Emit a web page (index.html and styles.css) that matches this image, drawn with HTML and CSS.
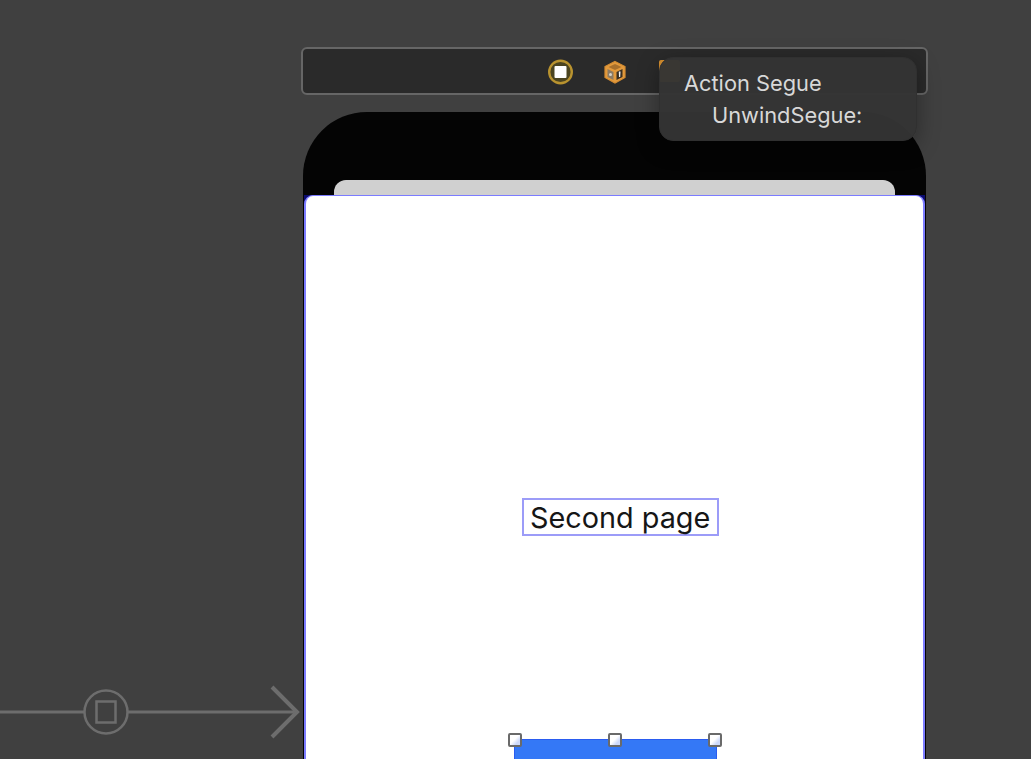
FILE: index.html
```html
<!DOCTYPE html>
<html lang="en">
<head>
<meta charset="utf-8">
<title>Storyboard</title>
<link rel="stylesheet" href="styles.css">
</head>
<body>
<main class="canvas">
  <svg class="segue" width="302" height="54" viewBox="0 0 302 54" aria-hidden="true">
    <path d="M0 27H84M128 27H297" fill="none" stroke="#6d6d6d" stroke-width="3"/>
    <path d="M272 2L297 27L272 52" fill="none" stroke="#6d6d6d" stroke-width="4"/>
    <circle cx="106" cy="27" r="21.5" fill="none" stroke="#6d6d6d" stroke-width="2.5"/>
    <rect x="96.5" y="16.5" width="19" height="21" fill="none" stroke="#6d6d6d" stroke-width="2.5"/>
  </svg>

  <section class="scene">
    <div class="dock">
      <svg class="dock-icon" width="26" height="26" viewBox="0 0 26 26" aria-hidden="true">
        <circle cx="12.5" cy="13" r="11.3" fill="#4b4420" stroke="#b9932f" stroke-width="2.4"/>
        <rect x="6.5" y="7" width="12" height="12" rx="1" fill="#fff"/>
      </svg>
      <svg class="dock-icon" width="24" height="26" viewBox="0 0 24 26" aria-hidden="true">
        <path d="M12 2.5L22 7.5V18.5L12 24L2 18.5V7.5Z" fill="#e39a3c" stroke="#d48c32" stroke-width="1.2"/>
        <path d="M12 5L18.5 8L12 11L5.5 8Z" fill="#a9702b"/>
        <path d="M4.5 10L10.5 13V21L4.5 18Z" fill="#8b7a63"/>
        <path d="M13.5 13L19.5 10V18L13.5 21Z" fill="#3a2f22"/>
        <path d="M15.8 12.5H17.5L17.2 18H16Z" fill="#f2f2f2"/>
        <circle cx="7.5" cy="15.5" r="1.5" fill="#d8d2c8"/>
      </svg>
      <svg class="dock-icon" width="24" height="26" viewBox="0 0 24 26" aria-hidden="true">
        <rect x="3" y="1" width="21" height="22" rx="2" fill="#d9912f"/>
      </svg>
    </div>

    <div class="device">
      <div class="back-sheet"></div>
      <div class="page-frame">
        <div class="page">
          <div class="page-label">Second page</div>
          <div class="selected-button">
            <span class="handle handle-left"></span>
            <span class="handle handle-middle"></span>
            <span class="handle handle-right"></span>
          </div>
        </div>
      </div>
    </div>

    <div class="tooltip">
      <div class="tooltip-title">Action Segue</div>
      <div class="tooltip-detail">UnwindSegue:</div>
    </div>
  </section>
</main>
</body>
</html>
```

FILE: styles.css
```css
* {
  box-sizing: border-box;
}

html,
body {
  margin: 0;
  height: 100%;
  overflow: hidden;
  background: #404040;
}

.canvas {
  position: relative;
  width: 1031px;
  height: 759px;
  overflow: hidden;
  padding: 48px 0 0 302px;
  font-family: "Inter", "Liberation Sans", sans-serif;
}

.segue {
  position: absolute;
  left: 0;
  top: 685px;
}

.scene {
  position: relative;
  width: 626px;
}

.dock {
  display: flex;
  align-items: center;
  gap: 29px;
  width: 627px;
  height: 48px;
  margin: -1px 0 0 -1px;
  padding: 2px 0 0 245px;
  background: #2a2a2a;
  border: 2px solid #666;
  border-radius: 6px;
}

.device {
  width: 623px;
  height: 660px;
  margin: 17px 0 0 1px;
  padding-top: 68px;
  background: #040404;
  border-radius: 64px 64px 0 0;
}

.back-sheet {
  height: 17px;
  margin: 0 31px;
  background: #d0d0d0;
  border-radius: 12px 12px 0 0;
}

.page-frame {
  margin: -2px 1px 0;
  background: #0b0b6e;
}

.page {
  height: 575px;
  padding-top: 302px;
  background: #fff;
  border: solid #7c7cff;
  border-width: 1px 2px 0;
  border-radius: 9px 9px 0 0;
}

.page-label {
  width: 197px;
  height: 38px;
  margin-left: 216px;
  padding-left: 6px;
  border: 2px solid #9c9cf8;
  color: #161616;
  font-size: 28.8px;
  font-weight: 400;
  line-height: 35px;
  white-space: nowrap;
}

.selected-button {
  position: relative;
  width: 203px;
  height: 60px;
  margin: 203px 0 0 208px;
  background: #3478f6;
  border: 1px solid #2a5cf0;
}

.handle {
  position: absolute;
  top: -7px;
  width: 14px;
  height: 14px;
  background: linear-gradient(135deg, #fff 45%, #cdd9fa 75%);
  border: 2px solid #6a6a6a;
  border-radius: 2px;
}

.handle-left {
  left: -7px;
}

.handle-middle {
  left: 93px;
}

.handle-right {
  right: -6px;
}

.tooltip {
  position: absolute;
  left: 357px;
  top: 10px;
  width: 258px;
  height: 84px;
  padding: 9px 0 0 24px;
  background: rgba(52, 52, 52, 0.97);
  border: 1px solid #303030;
  border-radius: 14px;
  box-shadow: 0 6px 22px rgba(0, 0, 0, 0.35);
  color: #d8d8d8;
  font-size: 21.8px;
  line-height: 32px;
  white-space: nowrap;
}

.tooltip-detail {
  padding-left: 28px;
}
```
